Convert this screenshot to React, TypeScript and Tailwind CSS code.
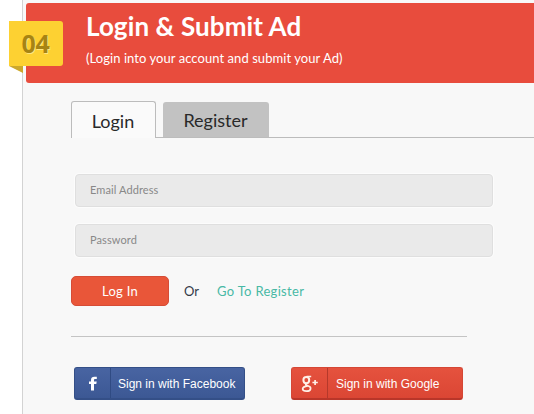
import React from "react";

function StepBadge() {
  return (
    <div className="absolute -left-[17px] top-[18px] w-[54px]">
      <div className="flex h-[45px] items-center justify-center rounded-tr-[3px] rounded-br-[3px] bg-[#fdd132] pt-px font-['Open_Sans',sans-serif] text-[25px] font-bold tracking-[-0.3px] text-[#a78413] [text-shadow:1px_1px_0_#ffe680]">
        <span className="-ml-px">04</span>
      </div>
      <svg className="block" width="14" height="7" viewBox="0 0 14 7">
        <path d="M0 0H14V7Z" fill="#cda82b" />
      </svg>
    </div>
  );
}

function Field({ label, type }: { label: string; type: string }) {
  return (
    <input
      type={type}
      placeholder={label}
      className="block h-[33px] w-[418px] rounded-[4px] border border-[#dfdfdf] bg-[#eaeaea] px-[14px] pb-[2px] text-[11px] tracking-[0.1px] shadow-[0_0_0_1px_#fcfcfc] outline-none placeholder:text-[#888888]"
    />
  );
}

export default function App() {
  return (
    <div className="h-[414px] w-[534px] overflow-hidden bg-white pl-[22px] font-['Lato',sans-serif]">
      <main className="h-full border-l border-[#d3d3d3] bg-[#f8f8f8] pl-[3px] pt-[3px]">
        <header className="relative h-20 rounded-l-[3px] bg-[#e84c3d] pl-[60px] pt-[7px] text-white">
          <StepBadge />
          <h1 className="h-8 whitespace-nowrap text-[26px] font-bold leading-8 tracking-[0.1px]">Login &amp; Submit Ad</h1>
          <p className="mt-[6px] whitespace-nowrap text-[13px] leading-5 tracking-[0.06px]">(Login into your account and submit your Ad)</p>
        </header>

        <nav className="ml-[45px] mt-[18px] flex h-[37px] items-stretch text-[18px] leading-none text-[#292929]">
          <button className="w-[85px] rounded-t-[3px] border border-b-0 border-[#bcbcbc] bg-[#fafafa] pr-[1px] pt-[2px]">Login</button>
          <span className="w-[7px] border-b border-[#bcbcbc]" />
          <button className="mt-px w-[106px] rounded-t-[3px] border-b border-[#bcbcbc] bg-[#c2c2c2] pr-[1px] pt-px">Register</button>
          <span className="flex-1 border-b border-[#bcbcbc]" />
        </nav>

        <form className="ml-[49px] mt-9 flex flex-col gap-[17px]" onSubmit={(e) => e.preventDefault()}>
          <Field label="Email Address" type="text" />
          <Field label="Password" type="password" />
        </form>

        <div className="ml-[45px] mt-[19px] flex h-[30px] items-center text-[13px]">
          <button className="h-[30px] w-[98px] rounded-[5px] border border-[#d64c36] bg-[#e95639] pt-px text-[13px] tracking-[0.3px] text-white">Log In</button>
          <span className="ml-[15px] w-[33px] pt-px text-[#333a48]">Or</span>
          <a href="#" className="whitespace-nowrap pt-px tracking-[0.31px] text-[#48b9a5]">Go To Register</a>
        </div>

        <hr className="ml-[45px] mt-[30px] w-[396px] border-0 border-t border-[#c4c4c4]" />

        <div className="ml-[48px] mt-[30px] flex gap-[46px] font-['Liberation_Sans',Arial,sans-serif] text-[12px] text-white">
          <button className="flex h-[33px] w-[171px] items-stretch rounded-[3px] border border-[#344f87] border-b-2 bg-gradient-to-b from-[#4864a2] to-[#3c5894]">
            <span className="flex w-[36px] items-center justify-center border-r border-[#304b83]">
              <svg width="10" height="15" viewBox="0 0 10 15" className="mt-px">
                <path d="M3 14.5V8H1V5.5H3V4C3 1.8 4.3 .7 6.3.7L8.8.8V3H7.2C6.3 3 6 3.5 6 4.3V5.5H8.7L8.3 8H6V14.5Z" fill="white" />
              </svg>
            </span>
            <span className="flex items-center whitespace-nowrap pl-[7px] pt-px">Sign in with Facebook</span>
          </button>
          <button className="flex h-[33px] w-[172px] items-stretch rounded-[3px] border border-[#d54735] border-b-2 border-b-[#b93629] bg-gradient-to-b from-[#e5523e] to-[#db4634]">
            <span className="flex w-[36px] items-center justify-center border-r border-[#b5392b]">
              <svg width="18" height="18" viewBox="0 0 18 18" fill="none" stroke="#fff0e8" className="mt-px">
                <ellipse cx="5.3" cy="5.1" rx="2.9" ry="3.2" strokeWidth="2" />
                <path d="M5.6 1.5H10.2M6.2 8.3C3.8 9.2 4.6 10.2 6.8 10.8C11.2 12 10.2 16.2 5.5 16.2C.6 16.2.5 12.4 4.6 11.4L6.8 10.9" strokeWidth="1.7" />
                <path d="M11.4 7.5H16.8M14.1 4.9V10.1" strokeWidth="1.7" />
              </svg>
            </span>
            <span className="flex items-center whitespace-nowrap pl-[8px] pt-px">Sign in with Google</span>
          </button>
        </div>
      </main>
    </div>
  );
}
